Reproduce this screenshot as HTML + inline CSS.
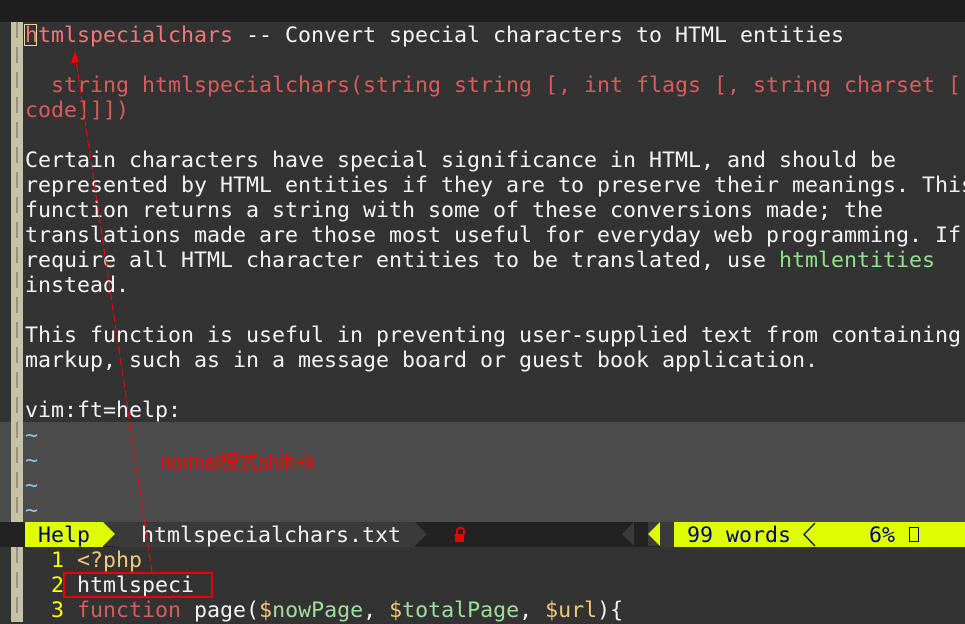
<!DOCTYPE html>
<html><head><meta charset="utf-8"><style>
body{margin:0;width:965px;height:622px;overflow:hidden;background:#333;position:relative;font-family:"DejaVu Sans Mono","Liberation Mono",monospace;font-size:21.6px;}
.top{position:absolute;left:0;top:0;width:965px;height:22px;background:#1f1f1f}
.gut{position:absolute;left:11px;top:22px;width:12px;height:600px;background:#c6c2a6}
.gut2{position:absolute;left:16px;top:22px;width:2px;height:600px;background:repeating-linear-gradient(#9a8f80 0 16px,transparent 16px 25px)}
.l{position:absolute;left:25px;height:25px;line-height:27px;white-space:pre;color:#f2f2f2}
.r{color:#d85c5c}.t{color:#f07878}.g{color:#8fe28a}.y{color:#ffff00}.o{color:#f2c77a}.h{color:#9ee09a}
.tl{position:absolute;left:0;top:422px;width:965px;height:100px;background:#4b4b4b}
.st{position:absolute;left:0;top:522px;width:965px;height:25px;line-height:27px;background:#222;white-space:pre}
</style></head><body>
<div class="top"></div>
<div style="position:absolute;left:0;top:472px;width:11px;height:25px;background:#555"></div>
<div class="tl"></div>
<div class="gut"></div><div class="gut2"></div>
<div style="position:absolute;left:24px;top:24px;width:13px;height:22px;border:1px solid #e8d890;box-sizing:border-box"></div>
<div class="l" style="top:22px"><span class="t">htmlspecialchars</span> -- Convert special characters to HTML entities</div>
<div class="l r" style="top:72px">  string htmlspecialchars(string string [, int flags [, string charset [</div>
<div class="l r" style="top:97px">code]]])</div>
<div class="l" style="top:147px">Certain characters have special significance in HTML, and should be</div>
<div class="l" style="top:172px">represented by HTML entities if they are to preserve their meanings. This</div>
<div class="l" style="top:197px">function returns a string with some of these conversions made; the</div>
<div class="l" style="top:222px">translations made are those most useful for everyday web programming. If</div>
<div class="l" style="top:247px">require all HTML character entities to be translated, use <span class="g">htmlentities</span></div>
<div class="l" style="top:272px">instead.</div>
<div class="l" style="top:322px">This function is useful in preventing user-supplied text from containing</div>
<div class="l" style="top:347px">markup, such as in a message board or guest book application.</div>
<div class="l" style="top:397px">vim:ft=help:</div>
<div class="l" style="top:422px;color:#8ac6e0">~</div>
<div class="l" style="top:447px;color:#8ac6e0">~</div>
<div class="l" style="top:472px;color:#8ac6e0">~</div>
<div class="l" style="top:497px;color:#8ac6e0">~</div>
<div class="st">
<div style="position:absolute;left:25px;top:0;width:78px;height:25px;background:#dfff00;color:#000080"> Help</div>
<div style="position:absolute;left:103px;top:0;width:0;height:0;border-top:12.5px solid #3a3a3a;border-bottom:12.5px solid #3a3a3a;border-left:12px solid #dfff00"></div>
<div style="position:absolute;left:115px;top:0;width:300px;height:25px;background:#3a3a3a;color:#f2f2f2">  htmlspecialchars.txt</div>
<div style="position:absolute;left:415px;top:0;width:0;height:0;border-top:12.5px solid transparent;border-bottom:12.5px solid transparent;border-left:12px solid #3a3a3a"></div>
<div style="position:absolute;left:455px;width:9px;height:8px;background:#e00;top:12px"></div>
<div style="position:absolute;left:456px;top:5px;width:5px;height:6px;border:2px solid #e00;border-bottom:none;border-radius:4px 4px 0 0"></div>
<div style="position:absolute;left:622px;top:0;width:0;height:0;border-top:12.5px solid transparent;border-bottom:12.5px solid transparent;border-right:12px solid #3a3a3a"></div>
<div style="position:absolute;left:648px;top:0;width:0;height:0;border-top:12.5px solid #3a3a3a;border-bottom:12.5px solid #3a3a3a;border-right:12px solid #dfff00"></div>
<div style="position:absolute;left:660px;top:0;width:14px;height:25px;background:#3a3a3a"></div>
<div style="position:absolute;left:674px;top:0;width:291px;height:25px;background:#dfff00;color:#000080"> 99 words </div>
<svg style="position:absolute;left:800px;top:0" width="20" height="25"><polyline points="15,1 4,12.5 15,24" fill="none" stroke="#000080" stroke-width="1.3"/></svg>
<div style="position:absolute;left:869px;top:0;color:#000080">6%</div>
<div style="position:absolute;left:909px;top:5px;width:10px;height:15px;border:1px solid #000080;box-sizing:border-box"></div>
</div>
<div class="l" style="top:547px"><span class="y">  1</span> <span class="o">&lt;?php</span></div>
<div class="l" style="top:572px"><span class="y">  2</span> htmlspeci</div>
<div class="l" style="top:597px"><span class="y">  3</span> <span class="r">function</span> page(<span class="o">$</span><span class="h">nowPage</span>, <span class="o">$</span><span class="h">totalPage</span>, <span class="o">$url</span>){</div>
<div style="position:absolute;left:63px;top:572px;width:150px;height:26px;border:2px solid #e00;box-sizing:border-box"></div>
<div style="position:absolute;left:160px;top:446px;color:#f00;font-family:'Liberation Sans','Noto Sans CJK SC',sans-serif;font-size:20px;letter-spacing:-0.3px">normal模式shift+k</div>
<svg style="position:absolute;left:0;top:0" width="965" height="622"><line x1="152" y1="572" x2="76" y2="60" stroke="#f00" stroke-width="1" stroke-dasharray="8,3"/><polygon points="75,51 71,63 79,62" fill="#f00"/></svg>
</body></html>
